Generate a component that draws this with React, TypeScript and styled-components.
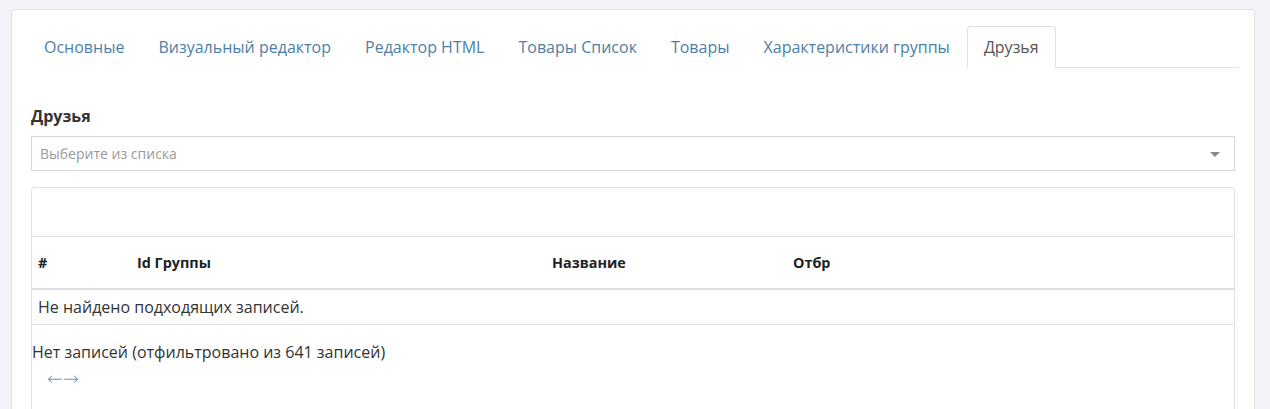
import React, { FC } from "react";
import styled, { createGlobalStyle } from "styled-components";

const LINK_COLOR = "#4e7fa6";
const BORDER = "#dfe1e6";

const GlobalStyle = createGlobalStyle`
  html, body {
    margin: 0;
    padding: 0;
    background: #f3f4f7;
    font-family: "Open Sans", "Liberation Sans", sans-serif;
    color: #333;
  }
  * { box-sizing: border-box; }
`;

const TABS = [
  "Основные",
  "Визуальный редактор",
  "Редактор HTML",
  "Товары Список",
  "Товары",
  "Характеристики группы",
  "Друзья",
];

const COLUMNS = [
  { title: "#", width: 99 },
  { title: "Id Группы", width: 415 },
  { title: "Название", width: 241 },
  { title: "Отбр", width: 0 },
];

const App: FC = () => {
  const active = "Друзья";

  return (
    <>
      <GlobalStyle />
      <Page>
        <Card>
          <TabList>
            {TABS.map((tab) => (
              <Tab key={tab} active={tab === active}>
                {tab}
              </Tab>
            ))}
          </TabList>

          <TabContent>
            <Label>Друзья</Label>
            <Select>
              <Placeholder>Выберите из списка</Placeholder>
              <Caret />
            </Select>

            <Panel>
              <Toolbar />
              <Table>
                <thead>
                  <tr>
                    {COLUMNS.map((col) => (
                      <HeadCell
                        key={col.title}
                        style={col.width ? { width: col.width } : undefined}
                      >
                        {col.title}
                      </HeadCell>
                    ))}
                  </tr>
                </thead>
                <tbody>
                  <tr>
                    <EmptyCell colSpan={4}>Не найдено подходящих записей.</EmptyCell>
                  </tr>
                </tbody>
              </Table>
              <Info>Нет записей (отфильтровано из 641 записей)</Info>
              <Pager>
                <span>←</span>
                <span>→</span>
              </Pager>
            </Panel>
          </TabContent>
        </Card>
      </Page>
    </>
  );
};

const Page = styled.div`
  padding: 9px 15px 0 11px;
  height: 409px;
  overflow: hidden;
`;

const Card = styled.div`
  background: #fff;
  border: 1px solid ${BORDER};
  border-bottom: none;
  border-radius: 4px 4px 0 0;
  padding: 16px 15px 0 15px;
  height: 420px;
`;

const TabList = styled.div`
  display: flex;
  border-bottom: 1px solid ${BORDER};
  height: 42px;
`;

const Tab = styled.div<{ active?: boolean }>`
  height: 42px;
  padding: 0 16px;
  display: flex;
  align-items: center;
  font-size: 16px;
  color: ${({ active }) => (active ? "#555" : LINK_COLOR)};
  background: #fff;
  border: 1px solid ${({ active }) => (active ? BORDER : "transparent")};
  border-bottom-color: ${({ active }) => (active ? "#fff" : "transparent")};
  border-radius: 4px 4px 0 0;
  white-space: nowrap;
`;

const TabContent = styled.div`
  padding: 37px 4px 0 4px;
`;

const Label = styled.div`
  font-size: 16px;
  font-weight: 700;
  color: #333;
  line-height: 22px;
  margin-bottom: 9px;
`;

const Select = styled.div`
  height: 35px;
  border: 1px solid #d4d6db;
  display: flex;
  align-items: center;
  justify-content: space-between;
  padding: 0 14px 0 8px;
`;

const Placeholder = styled.span`
  font-size: 14px;
  color: #999;
`;

const Caret = styled.span`
  width: 0;
  height: 0;
  border-left: 5px solid transparent;
  border-right: 5px solid transparent;
  border-top: 5px solid #888;
  margin-top: 1px;
`;

const Panel = styled.div`
  margin-top: 16px;
  border: 1px solid ${BORDER};
  border-bottom: none;
  border-radius: 4px 4px 0 0;
  height: 240px;
`;

const Toolbar = styled.div`
  height: 48px;
`;

const Table = styled.table`
  width: 100%;
  border-collapse: collapse;
`;

const HeadCell = styled.th`
  text-align: left;
  font-size: 14.4px;
  font-weight: 700;
  color: #222;
  height: 52px;
  padding: 0 6px;
  border-top: 1px solid ${BORDER};
  border-bottom: 2px solid #dcdde3;
`;

const EmptyCell = styled.td`
  font-size: 16px;
  color: #333;
  height: 36px;
  padding: 0 6px;
  border-bottom: 1px solid ${BORDER};
`;

const Info = styled.div`
  font-size: 16px;
  color: #333;
  padding: 16px 0 0 0;
  line-height: 22px;
`;

const Pager = styled.div`
  display: flex;
  padding: 3px 0 0 15px;
  font-family: "DejaVu Sans", sans-serif;
  font-weight: 200;
  font-size: 19px;
  line-height: 24px;
  color: #6f9cbd;
`;

export default App;
